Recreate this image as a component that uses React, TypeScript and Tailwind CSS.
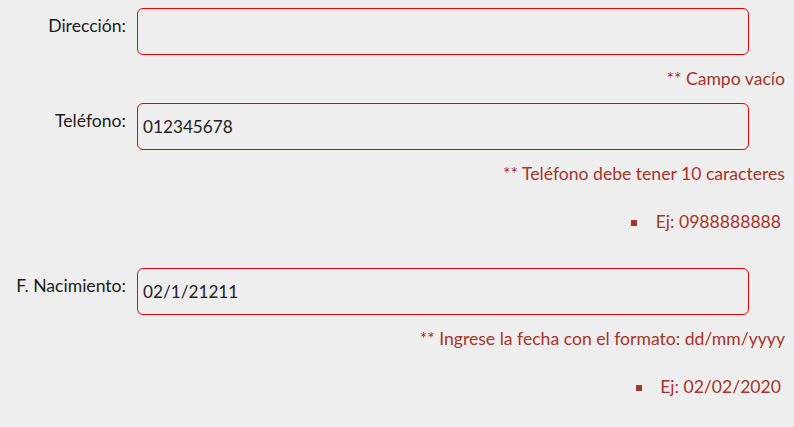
const fields = [
  { label: "Dirección:", value: "", error: "** Campo vacío", example: "" },
  {
    label: "Teléfono:",
    value: "012345678",
    error: "** Teléfono debe tener 10 caracteres",
    example: "Ej: 0988888888",
  },
  {
    label: "F. Nacimiento:",
    value: "02/1/21211",
    error: "** Ingrese la fecha con el formato: dd/mm/yyyy",
    example: "Ej: 02/02/2020",
  },
];

export default function App() {
  return (
    <div className="min-h-[427px] w-[794px] bg-[#eeeeee] pt-2 font-['Lato',sans-serif] text-[17.6px] text-[#1c1c1c]">
      {fields.map((f) => (
        <div key={f.label} className={f.example ? "pb-[34px]" : "pb-3"}>
          <div className="flex items-start gap-[11px]">
            <label className="mt-[6px] w-[126px] text-right leading-6">{f.label}</label>
            <input
              readOnly
              value={f.value}
              className="h-[47px] w-[612px] rounded-[6px] border border-[#ee0000] bg-transparent px-[5px] text-[17.2px] text-[#222] outline-none"
            />
          </div>
          <p className="mt-3 pr-[9px] text-right leading-6 text-[#a5342b]">{f.error}</p>
          {f.example && (
            <ul className="mt-6 list-inside list-[square] pr-[13px] text-right leading-6 text-[#a5342b]">
              <li>{f.example}</li>
            </ul>
          )}
        </div>
      ))}
    </div>
  );
}
